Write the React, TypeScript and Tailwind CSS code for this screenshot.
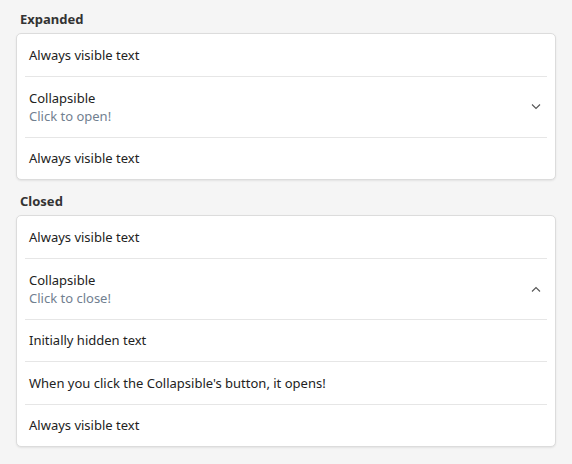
import { useState } from 'react'

function Chevron({ up }: { up: boolean }) {
  return (
    <svg width="10" height="6" viewBox="0 0 10 6" fill="none" className="text-[#555]">
      {up ? (
        <path d="M1 5.5 L5 1.5 L9 5.5" stroke="currentColor" strokeWidth="1.1" />
      ) : (
        <path d="M1 0.5 L5 4.5 L9 0.5" stroke="currentColor" strokeWidth="1.1" />
      )}
    </svg>
  )
}

function Row({ children }: { children: React.ReactNode }) {
  return <div className="px-1 py-[11.75px] border-b border-[#e6e6e6] last:border-b-0">{children}</div>
}

function Group({ title, startOpen }: { title: string; startOpen: boolean }) {
  const [open, setOpen] = useState(startOpen)
  return (
    <section className="mb-[12px]">
      <h2 className="font-bold text-[13px] leading-[18px] text-[#333] px-1 mb-[5px]">{title}</h2>
      <div className="bg-white border border-[#dcdcdc] rounded-[5px] shadow-[0_1px_2px_rgba(0,0,0,0.08)] px-2">
        <Row>Always visible text</Row>
        <button
          type="button"
          onClick={() => setOpen(!open)}
          className="w-full flex items-center justify-between text-left px-1 py-3 border-b border-[#e6e6e6]"
        >
          <div>
            <div>Collapsible</div>
            <div className="text-[#718090]">{open ? 'Click to close!' : 'Click to open!'}</div>
          </div>
          <span className="mr-[2px]">
            <Chevron up={open} />
          </span>
        </button>
        {open && (
          <>
            <Row>Initially hidden text</Row>
            <Row>When you click the Collapsible's button, it opens!</Row>
          </>
        )}
        <Row>Always visible text</Row>
      </div>
    </section>
  )
}

export default function App() {
  return (
    <div
      className="min-h-screen bg-[#f5f5f5] px-4 pt-[10px] text-[13px] leading-[18px] text-[#222]"
      style={{ fontFamily: '"Noto Sans", "Open Sans", sans-serif' }}
    >
      <Group title="Expanded" startOpen={false} />
      <Group title="Closed" startOpen={true} />
    </div>
  )
}
